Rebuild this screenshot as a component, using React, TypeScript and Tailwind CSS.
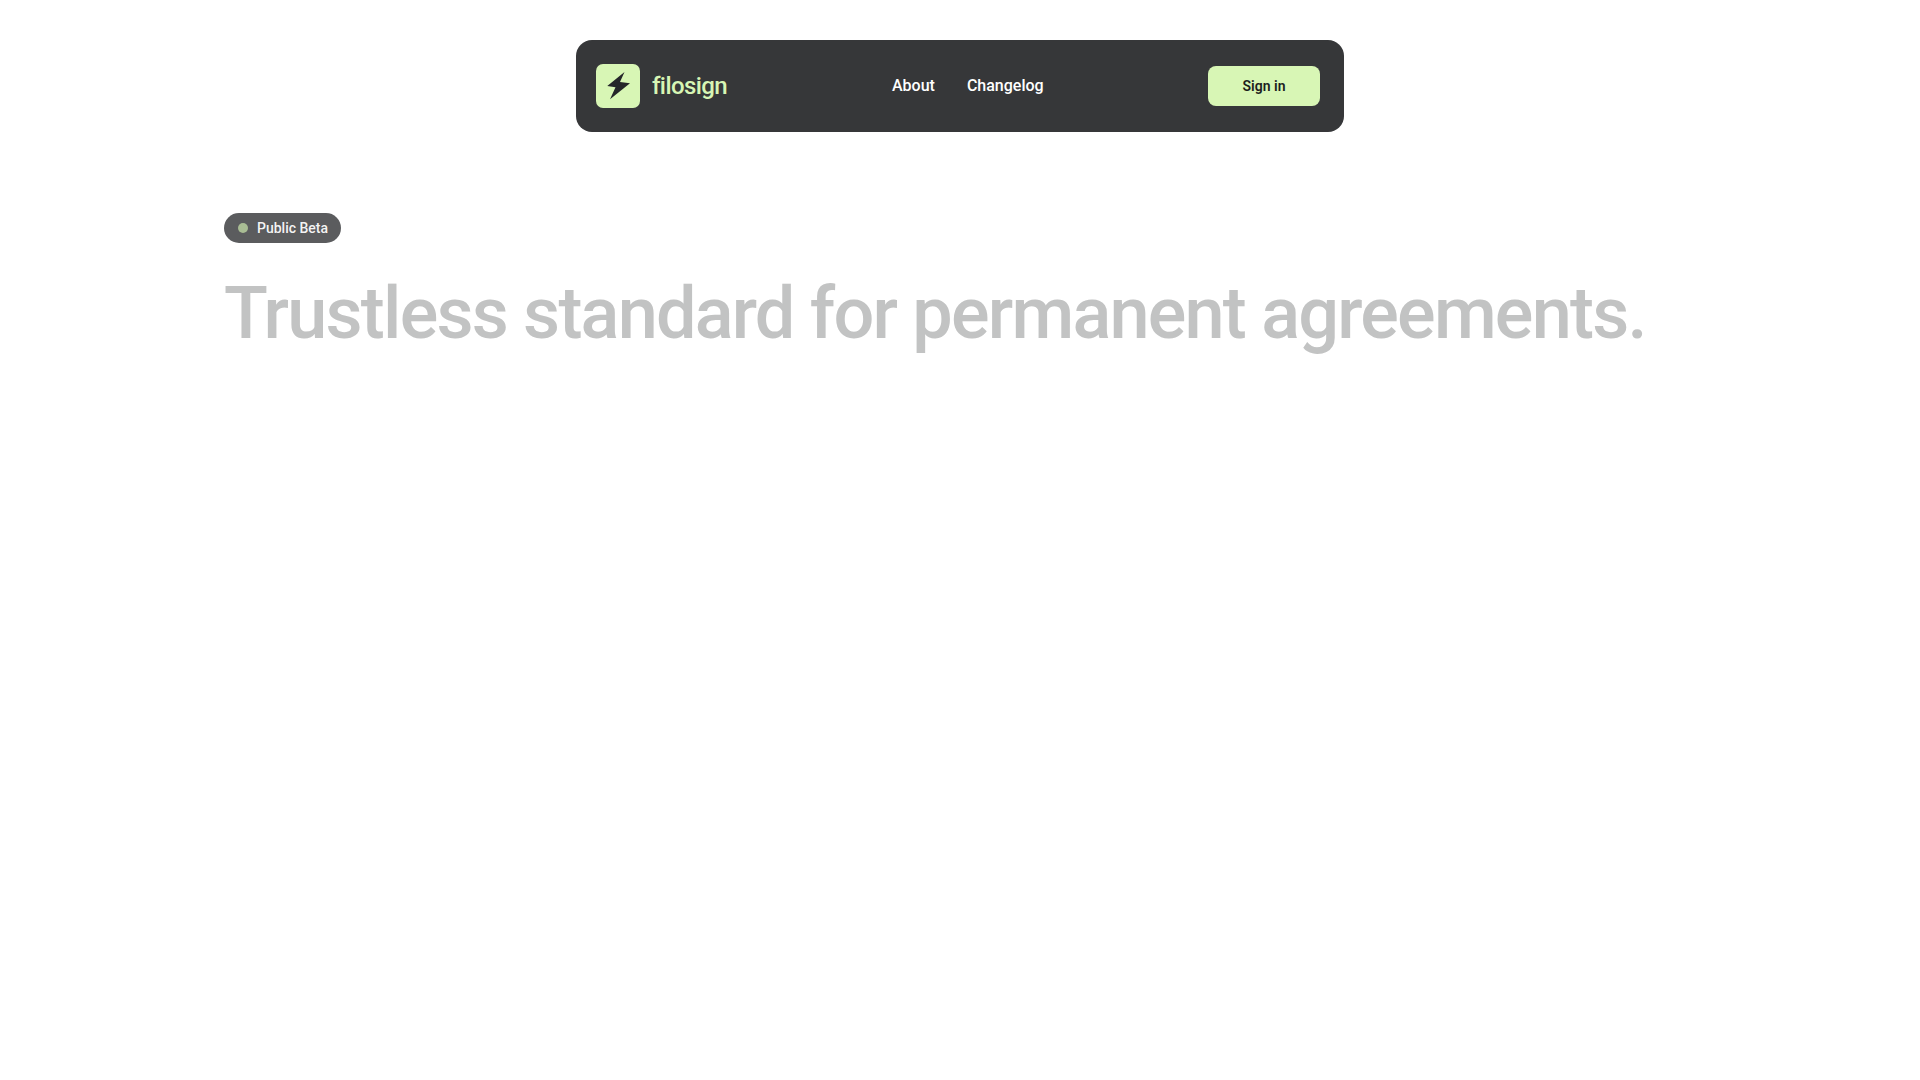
import React from "react";

export default function App() {
  return (
    <div className="min-h-screen bg-white font-['Roboto',sans-serif]">
      <div className="flex justify-center pt-10">
        <nav className="w-[768px] h-[92px] rounded-2xl bg-[#363739] pl-5 pr-6 flex items-center">
          <div className="flex items-center gap-3 w-[296px]">
            <div className="w-11 h-11 rounded-[7px] bg-[#d8f6b5] flex items-center justify-center">
              <svg width="30" height="30" viewBox="0 0 24 24" fill="#25262a">
                <path d="M17.2 0.8 L3.4 12 L10 12.9 L5.6 22.6 L21.6 9.8 L13.6 8.8 Z" />
              </svg>
            </div>
            <span className="text-2xl text-[#d8f6b5] font-medium tracking-tight">filosign</span>
          </div>
          <div className="flex items-center gap-8 text-white text-base font-medium">
            <span>About</span>
            <span>Changelog</span>
          </div>
          <button className="ml-auto w-[112px] h-10 rounded-lg bg-[#d8f6b5] text-[#1d1e20] text-sm font-semibold">
            Sign in
          </button>
        </nav>
      </div>
      <main className="pl-[224px] pt-[81px]">
        <div className="inline-flex items-center gap-[9px] h-[30px] w-[117px] pl-[14px] rounded-full bg-[#5b5c5e] text-white/95 text-sm font-medium">
          <span className="w-[10px] h-[10px] rounded-full bg-[#a9bd94]" />
          <span>Public Beta</span>
        </div>
        <h1 className="mt-[31px] text-[72px] leading-[80px] font-medium text-[#c2c3c3] tracking-[-1.77px] whitespace-nowrap">
          Trustless standard for permanent agreements.
        </h1>
      </main>
    </div>
  );
}
